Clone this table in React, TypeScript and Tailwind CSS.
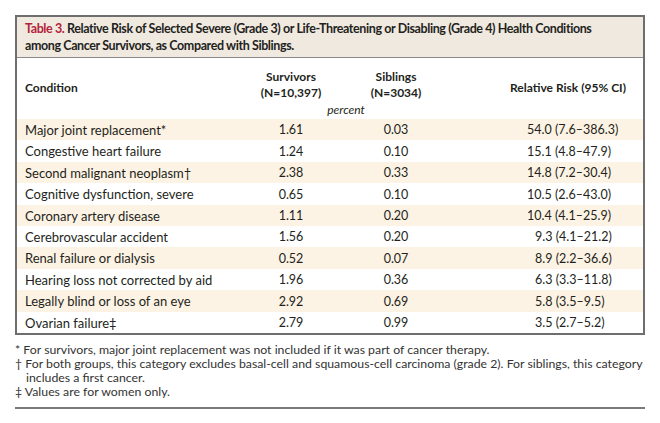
const rows = [
  { name: "Major joint replacement*", s: "1.61", b: "0.03", rr: "54.0 (7.6–386.3)", two: true },
  { name: "Congestive heart failure", s: "1.24", b: "0.10", rr: "15.1 (4.8–47.9)", two: true },
  { name: "Second malignant neoplasm†", s: "2.38", b: "0.33", rr: "14.8 (7.2–30.4)", two: true },
  { name: "Cognitive dysfunction, severe", s: "0.65", b: "0.10", rr: "10.5 (2.6–43.0)", two: true },
  { name: "Coronary artery disease", s: "1.11", b: "0.20", rr: "10.4 (4.1–25.9)", two: true },
  { name: "Cerebrovascular accident", s: "1.56", b: "0.20", rr: "9.3 (4.1–21.2)", two: false },
  { name: "Renal failure or dialysis", s: "0.52", b: "0.07", rr: "8.9 (2.2–36.6)", two: false },
  { name: "Hearing loss not corrected by aid", s: "1.96", b: "0.36", rr: "6.3 (3.3–11.8)", two: false },
  { name: "Legally blind or loss of an eye", s: "2.92", b: "0.69", rr: "5.8 (3.5–9.5)", two: false },
  { name: "Ovarian failure‡", s: "2.79", b: "0.99", rr: "3.5 (2.7–5.2)", two: false },
]

export default function App() {
  return (
    <div className="w-[660px] h-[423px] bg-white p-[15px] text-[#231f20] font-['Lato','Open_Sans',sans-serif]">
      {/* Table box */}
      <div className="border-2 border-[#6e6e6e]">
        <div className="bg-[#f0e9e0] border-b border-[#8a8a8a] px-[8px] pt-[3px] h-[41px] text-[12.5px] leading-[17px] font-bold tracking-[-0.4px] whitespace-nowrap">
          <span className="text-[#b3243b]">Table 3.</span> Relative Risk of Selected Severe (Grade 3) or Life-Threatening or Disabling (Grade 4) Health Conditions
          <br />
          among Cancer Survivors, as Compared with Siblings.
        </div>

        {/* Header */}
        <div className="grid grid-cols-[224px_100px_110px_192px] items-end pt-[11px] text-[12px] leading-[16px] font-bold">
          <div className="pl-[8px] pb-[5px]">Condition</div>
          <div className="text-center">
            Survivors
            <br />
            (N=10,397)
          </div>
          <div className="text-center">
            Siblings
            <br />
            (N=3034)
          </div>
          <div className="pl-[59px] pb-[5px]">Relative Risk (95% CI)</div>
        </div>
        <div className="grid grid-cols-[224px_210px_192px] h-[18px] items-center text-[12px] italic">
          <div />
          <div className="text-center">percent</div>
          <div />
        </div>

        {/* Rows */}
        {rows.map((r, i) => (
          <div
            key={r.name}
            className={`grid grid-cols-[224px_100px_110px_192px] h-[21.4px] pt-[2px] items-center text-[12.5px] ${i % 2 === 0 ? "bg-[#fdf3e4]" : "bg-white"}`}
          >
            <div className="pl-[8px] text-[13px]">{r.name}</div>
            <div className="text-center">{r.s}</div>
            <div className="text-center">{r.b}</div>
            <div className={r.two ? "pl-[76px]" : "pl-[84px]"}>{r.rr}</div>
          </div>
        ))}
      </div>

      {/* Footnotes */}
      <div className="mt-[8px] text-[12.3px] leading-[14px] text-[#333]">
        <p className="pl-[11px] -indent-[11px]">* For survivors, major joint replacement was not included if it was part of cancer therapy.</p>
        <p className="pl-[11px] -indent-[11px] whitespace-nowrap">
          † For both groups, this category excludes basal-cell and squamous-cell carcinoma (grade 2). For siblings, this category
          <br />
          includes a first cancer.
        </p>
        <p className="pl-[11px] -indent-[11px]">‡ Values are for women only.</p>
      </div>
      <div className="mt-[8px] h-[2px] bg-[#7a7a7a]" />
    </div>
  )
}
